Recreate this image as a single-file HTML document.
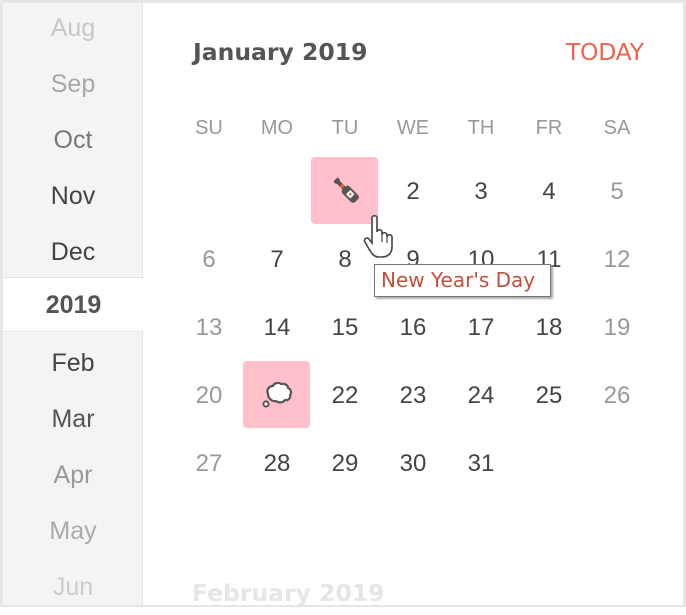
<!DOCTYPE html>
<html><head><style>
*{margin:0;padding:0;box-sizing:border-box}
body{width:686px;height:607px;background:#fff;font-family:"Liberation Sans","DejaVu Sans",sans-serif;position:relative;overflow:hidden}
.frame{position:absolute;left:0;top:0;width:686px;height:607px;border:3px solid #e6e6e6;border-bottom-width:2px}
.side{position:absolute;left:3px;top:0;width:140px;height:607px;background:#f4f4f4;border-right:1px solid #e4e4e4}
.m{position:absolute;left:3px;width:140px;text-align:center;font-size:25px;line-height:56px;height:56px}
.c{position:absolute;width:68px;text-align:center;font-size:24px;line-height:30px;color:#444}
.h{position:absolute;width:68px;text-align:center;font-size:20px;color:#999;top:117px}
.hl{position:absolute;width:67px;height:67px;background:#ffc0cb;border-radius:4px}
.dv{font-family:"DejaVu Sans","Liberation Sans",sans-serif}
</style></head><body>
<div class="side"></div>
<div class="m" style="top:0;color:#c8c8c8">Aug</div>
<div class="m" style="top:56px;color:#a8a8a8">Sep</div>
<div class="m" style="top:112px;color:#777">Oct</div>
<div class="m" style="top:168px;color:#444">Nov</div>
<div class="m" style="top:224px;color:#444">Dec</div>
<div class="m" style="top:277px;height:55px;background:#fff;border-top:1px solid #e4e4e4;border-bottom:1px solid #e4e4e4;font-weight:bold;color:#555;line-height:55px;width:141px">2019</div>
<div class="m" style="top:335px;color:#444">Feb</div>
<div class="m" style="top:391px;color:#555">Mar</div>
<div class="m" style="top:447px;color:#999">Apr</div>
<div class="m" style="top:503px;color:#aaa">May</div>
<div class="m" style="top:559px;color:#ccc">Jun</div>

<div class="dv" style="position:absolute;left:193px;top:38px;font-size:23.5px;font-weight:bold;color:#555">January 2019</div>
<div class="dv" style="position:absolute;left:566px;top:38px;font-size:23.5px;color:#f0624d;letter-spacing:-0.3px">TODAY</div>
<div class="dv" style="position:absolute;left:192px;top:579px;font-size:23.5px;font-weight:bold;color:#e6e6e6">February 2019</div>

<div class="h" style="left:175px">SU</div><div class="h" style="left:243px">MO</div><div class="h" style="left:311px">TU</div><div class="h" style="left:379px">WE</div><div class="h" style="left:447px">TH</div><div class="h" style="left:515px">FR</div><div class="h" style="left:583px">SA</div>

<div class="hl" style="left:311px;top:157px"></div>
<div class="hl" style="left:243px;top:361px"></div>
<svg style="position:absolute;left:329px;top:173px" width="34" height="34" viewBox="0 0 34 34">
<g transform="rotate(-45 17 17)"><rect x="12" y="14" width="10" height="18" rx="3" fill="#555"/><rect x="15" y="5" width="4" height="10" fill="#555"/><rect x="14" y="2" width="6" height="4" rx="1" fill="#555"/><rect x="15" y="10" width="4" height="3" fill="#e85c41"/><rect x="14" y="20" width="6" height="6" fill="#fff"/><circle cx="17" cy="23" r="1.3" fill="#e85c41"/></g></svg>
<svg style="position:absolute;left:259px;top:378px" width="40" height="34" viewBox="0 0 40 34">
<path d="M9 16c-2-4 1-8 5-8 1-3 6-4 8-2 3-1 7 1 7 4 3 1 4 5 2 7 1 3-2 6-5 5-2 3-7 3-9 1-4 1-8-3-8-7z" fill="#fff" stroke="#555" stroke-width="2.2" stroke-linejoin="round"/><circle cx="7" cy="26" r="2.6" fill="#fff" stroke="#555" stroke-width="2"/></svg>

<div class="c" style="left:379px;top:177px">2</div><div class="c" style="left:447px;top:177px">3</div><div class="c" style="left:515px;top:177px">4</div><div class="c" style="left:583px;top:177px;color:#999">5</div>
<div class="c" style="left:175px;top:245px;color:#999">6</div><div class="c" style="left:243px;top:245px">7</div><div class="c" style="left:311px;top:245px">8</div><div class="c" style="left:379px;top:245px">9</div><div class="c" style="left:447px;top:245px">10</div><div class="c" style="left:515px;top:245px">11</div><div class="c" style="left:583px;top:245px;color:#999">12</div>
<div class="c" style="left:175px;top:313px;color:#999">13</div><div class="c" style="left:243px;top:313px">14</div><div class="c" style="left:311px;top:313px">15</div><div class="c" style="left:379px;top:313px">16</div><div class="c" style="left:447px;top:313px">17</div><div class="c" style="left:515px;top:313px">18</div><div class="c" style="left:583px;top:313px;color:#999">19</div>
<div class="c" style="left:175px;top:381px;color:#999">20</div><div class="c" style="left:311px;top:381px">22</div><div class="c" style="left:379px;top:381px">23</div><div class="c" style="left:447px;top:381px">24</div><div class="c" style="left:515px;top:381px">25</div><div class="c" style="left:583px;top:381px;color:#999">26</div>
<div class="c" style="left:175px;top:449px;color:#999">27</div><div class="c" style="left:243px;top:449px">28</div><div class="c" style="left:311px;top:449px">29</div><div class="c" style="left:379px;top:449px">30</div><div class="c" style="left:447px;top:449px">31</div>

<svg style="position:absolute;left:360px;top:214px" width="40" height="46" viewBox="0 0 40 46">
<path d="M12 4c0-3 5-3 5 0v14c0-3 5-3 5 0v3c0-3 5-3 5 0v2c0-3 5-3 5 0v10c0 6-4 10-10 10h-3c-5 0-7-3-10-8l-4-7c-2-3 2-5 4-3l3 4z" fill="#fff" stroke="#444" stroke-width="1.6"/>
<path d="M22 21v7M27 23v6" stroke="#444" stroke-width="1.2"/></svg>
<div class="dv" style="position:absolute;left:374px;top:264px;width:177px;height:33px;border:1px solid #767676;background:#fff;box-shadow:2px 2px 2px #aaa;font-size:20px;color:#c0503a;line-height:30px;padding-left:6px;white-space:nowrap;overflow:hidden">New Year's Day</div>
<div class="frame"></div>
</body></html>
